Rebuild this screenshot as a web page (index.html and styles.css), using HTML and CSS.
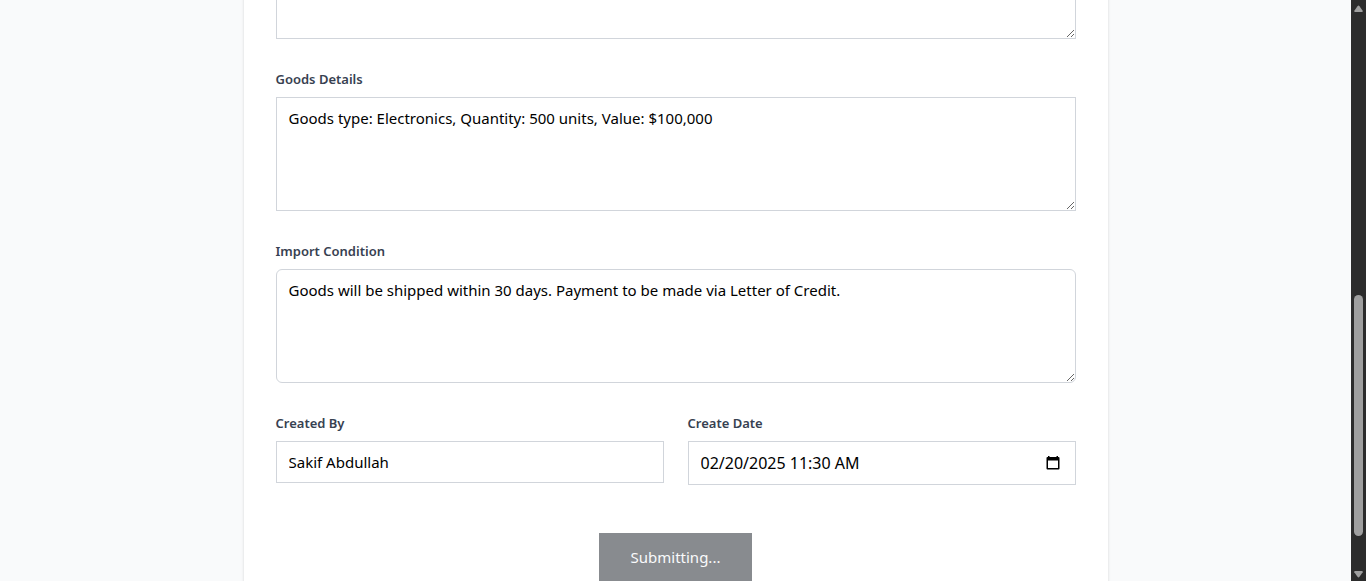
FILE: index.html
```html
<!DOCTYPE html>
<html lang="en">
<head>
<meta charset="utf-8">
<title>Import Form</title>
<link rel="stylesheet" href="styles.css">
</head>
<body>
<div class="shell">
  <main class="view">
    <form class="card">
      <div class="field">
        <textarea class="control" rows="4" aria-label="Details"></textarea>
      </div>
      <div class="field">
        <label class="label" for="goods">Goods Details</label>
        <textarea class="control" id="goods" rows="4">Goods type: Electronics, Quantity: 500 units, Value: $100,000</textarea>
      </div>
      <div class="field">
        <label class="label" for="condition">Import Condition</label>
        <textarea class="control rounded" id="condition" rows="4">Goods will be shipped within 30 days. Payment to be made via Letter of Credit.</textarea>
      </div>
      <div class="row">
        <div class="field">
          <label class="label" for="creator">Created By</label>
          <input class="control" id="creator" type="text" value="Sakif Abdullah">
        </div>
        <div class="field">
          <label class="label" for="date">Create Date</label>
          <div class="date">
            <input class="date-text" id="date" type="text" value="02/20/2025 11:30 AM">
            <button class="picker" type="button" aria-label="Open calendar">
              <svg class="calendar" viewBox="0 0 14 14"><path fill-rule="evenodd" d="M2 0H3.5V1H10.5V0H12V1H12.5Q13.5 1 13.5 2V12.5Q13.5 13.5 12.5 13.5H1.5Q.5 13.5 .5 12.5V2Q.5 1 1.5 1H2ZM2 4.5V12H12V4.5Z"/></svg>
            </button>
          </div>
        </div>
      </div>
      <div class="actions">
        <button class="submit" type="submit" disabled>Submitting...</button>
      </div>
    </form>
  </main>
  <div class="scrollbar" aria-hidden="true">
    <svg class="arrow" viewBox="0 0 9 8"><path d="M3.5 1.2Q4.5 0 5.5 1.2L8.7 5.8Q9 7 8 7H1Q0 7 .3 5.8Z"/></svg>
    <div class="track"><div class="thumb"></div></div>
    <svg class="arrow" viewBox="0 0 9 8"><path d="M3.5 6.8Q4.5 8 5.5 6.8L8.7 2.2Q9 1 8 1H1Q0 1 .3 2.2Z"/></svg>
  </div>
</div>
</body>
</html>
```
FILE: styles.css
```css
* {
  box-sizing: border-box;
}

body {
  margin: 0;
  background: #f9fafb;
  font-family: "Segoe UI", "Noto Sans", sans-serif;
  font-size: 15px;
  line-height: 24px;
  color: #000;
}

.shell {
  display: flex;
  height: 100vh;
  overflow: hidden;
}

.view {
  flex: 1;
  min-width: 0;
  overflow: hidden;
}

.card {
  display: flex;
  flex-direction: column;
  gap: 30px;
  max-width: 864px;
  margin: -107px auto 0;
  padding: 32px;
  background: #fff;
  box-shadow: 0 1px 3px rgba(0, 0, 0, 0.1), 0 1px 2px rgba(0, 0, 0, 0.06);
}

.row {
  display: grid;
  grid-template-columns: 1fr 1fr;
  gap: 24px;
}

.label {
  display: block;
  margin-bottom: 8px;
  font-size: 13px;
  font-weight: 600;
  line-height: 20px;
  color: #374151;
}

.control {
  display: block;
  width: 100%;
  margin: 0;
  padding: 8px 12px;
  border: 1px solid #d1d5db;
  border-radius: 0;
  background: #fff;
  color: inherit;
  font: inherit;
  outline: none;
}

textarea.control {
  resize: vertical;
}

input.control {
  height: 42px;
}

.date {
  display: flex;
  align-items: center;
  height: 44px;
  padding: 0 15px 0 12px;
  border: 1px solid #d1d5db;
  background: #fff;
}

.date-text {
  flex: 1;
  min-width: 0;
  padding: 0;
  border: 0;
  background: none;
  color: inherit;
  font: inherit;
  font-size: 16px;
  outline: none;
}

.picker {
  display: flex;
  padding: 0;
  border: 0;
  background: none;
}

.calendar {
  width: 14px;
  height: 14px;
}

.rounded {
  border-radius: 6px;
}

.actions {
  display: flex;
  justify-content: center;
  padding-top: 18px;
}

.submit {
  padding: 12px 32px;
  border: 0;
  background: #888b8f;
  color: #f9fafb;
  font: inherit;
}

.scrollbar {
  display: flex;
  flex-direction: column;
  align-items: center;
  width: 15px;
  padding: 5px 0 3px;
  background: #2c2c2c;
}

.arrow {
  width: 9px;
  height: 8px;
  fill: #9f9f9f;
}

.track {
  display: flex;
  flex: 1;
  flex-direction: column;
  justify-content: flex-end;
  padding-bottom: 34px;
}

.thumb {
  width: 9px;
  height: 46%;
  border-radius: 5px;
  background: #9f9f9f;
}
```
